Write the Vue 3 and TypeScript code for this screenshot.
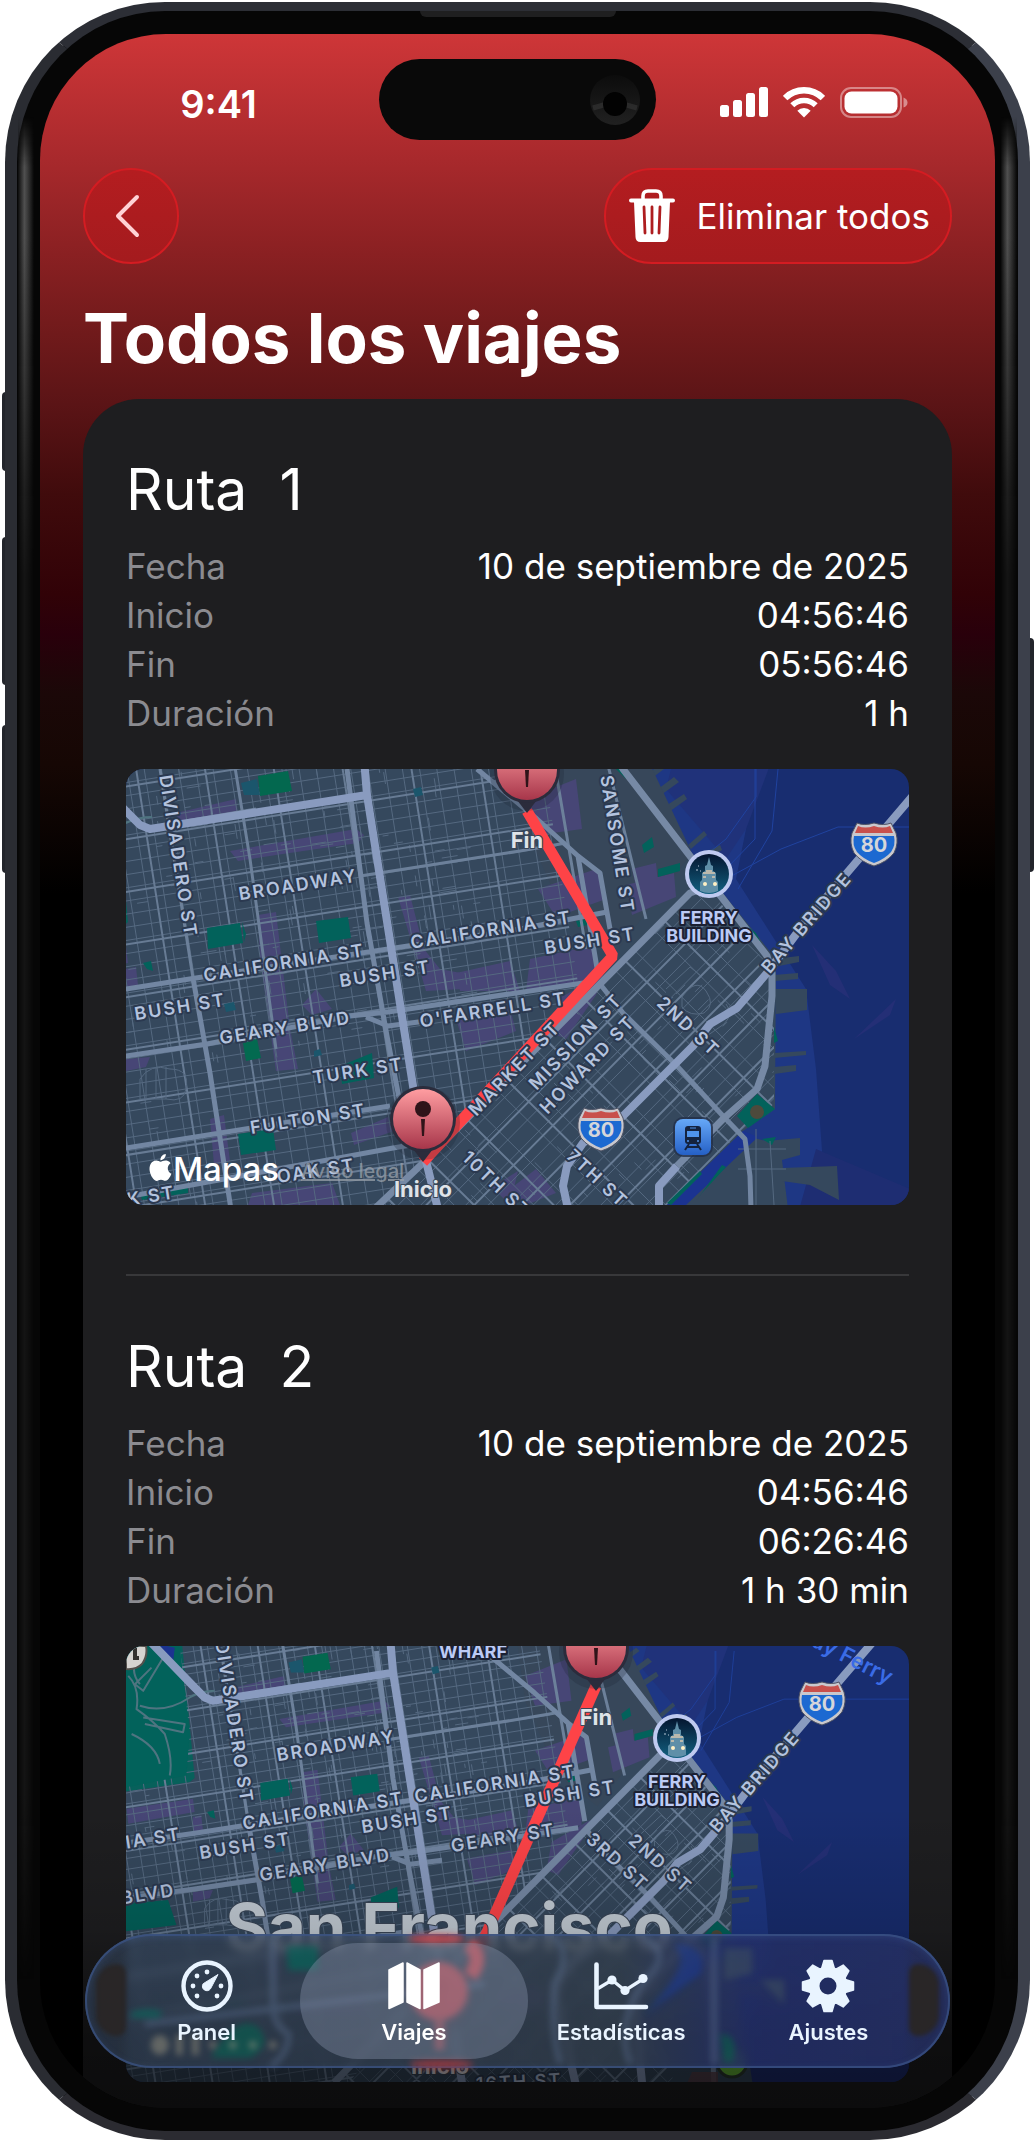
<script setup lang="ts">
interface Detail {
  term: string
  value: string
}

interface StreetLabel {
  text: string
  x: number
  y: number
  angle: number
  anchor?: 'start' | 'middle' | 'end'
}

interface Point {
  x: number
  y: number
}

interface Trip {
  id: number
  details: Detail[]
  cityTransform: string
  streets: StreetLabel[]
  shields: Point[]
  ferry: Point
  route: string
  start: Point
  end: Point
}

const trips: Trip[] = [
  {
    id: 1,
    details: [
      { term: 'Fecha', value: '10 de septiembre de 2025' },
      { term: 'Inicio', value: '04:56:46' },
      { term: 'Fin', value: '05:56:46' },
      { term: 'Duración', value: '1 h' },
    ],
    cityTransform: 'translate(0 0)',
    streets: [
      { text: 'DIVISADERO ST', x: 53, y: 87, angle: 81 },
      { text: 'BROADWAY', x: 172, y: 115, angle: -9 },
      { text: 'CALIFORNIA ST', x: 158, y: 193, angle: -9 },
      { text: 'CALIFORNIA ST', x: 365, y: 160, angle: -9 },
      { text: 'BUSH ST', x: 54, y: 237, angle: -9 },
      { text: 'BUSH ST', x: 259, y: 204, angle: -9 },
      { text: 'BUSH ST', x: 464, y: 171, angle: -9 },
      { text: 'GEARY BLVD', x: 159, y: 258, angle: -9 },
      { text: "O'FARRELL ST", x: 367, y: 240, angle: -9 },
      { text: 'TURK ST', x: 232, y: 301, angle: -9 },
      { text: 'FULTON ST', x: 182, y: 349, angle: -9 },
      { text: 'OAK ST', x: 190, y: 401, angle: -9 },
      { text: 'K ST', x: 25, y: 426, angle: -9 },
      { text: 'SANSOME ST', x: 492, y: 75, angle: 81 },
      { text: 'MARKET ST', x: 388, y: 299, angle: -46 },
      { text: 'MISSION ST', x: 449, y: 272, angle: -46 },
      { text: 'HOWARD ST', x: 461, y: 295, angle: -46 },
      { text: '2ND ST', x: 563, y: 257, angle: 43 },
      { text: '10TH ST', x: 371, y: 415, angle: 44 },
      { text: '7TH ST', x: 472, y: 409, angle: 43 },
      { text: 'BAY BRIDGE', x: 680, y: 153, angle: -49 },
    ],
    shields: [
      { x: 748, y: 74 },
      { x: 475, y: 359 },
    ],
    ferry: { x: 583, y: 105 },
    route: 'M297 393L487 187L401 42',
    start: { x: 297, y: 350 },
    end: { x: 401, y: 1 },
  },
  {
    id: 2,
    details: [
      { term: 'Fecha', value: '10 de septiembre de 2025' },
      { term: 'Inicio', value: '04:56:46' },
      { term: 'Fin', value: '06:26:46' },
      { term: 'Duración', value: '1 h 30 min' },
    ],
    cityTransform: 'translate(67 5) scale(.83)',
    streets: [
      { text: 'DIVISADERO ST', x: 109, y: 76, angle: 81 },
      { text: 'BROADWAY', x: 210, y: 99, angle: -9 },
      { text: 'CALIFORNIA ST', x: 197, y: 164, angle: -9 },
      { text: 'CALIFORNIA ST', x: 369, y: 137, angle: -9 },
      { text: 'IA ST', x: 55, y: 187, angle: -9, anchor: 'end' },
      { text: 'BUSH ST', x: 119, y: 199, angle: -9 },
      { text: 'BUSH ST', x: 281, y: 173, angle: -9 },
      { text: 'BUSH ST', x: 444, y: 147, angle: -9 },
      { text: 'GEARY BLVD', x: 199, y: 218, angle: -9 },
      { text: 'GEARY ST', x: 377, y: 191, angle: -9 },
      { text: 'BLVD', x: 49, y: 243, angle: -9, anchor: 'end' },
      { text: '3RD ST', x: 492, y: 215, angle: 42 },
      { text: '2ND ST', x: 535, y: 217, angle: 42 },
      { text: 'BAY BRIDGE', x: 628, y: 135, angle: -49 },
      { text: '16TH ST', x: 393, y: 435, angle: -3 },
    ],
    shields: [{ x: 696, y: 56 }],
    ferry: { x: 551, y: 92 },
    route: 'M314 392L470 40',
    start: { x: 314, y: 350 },
    end: { x: 470, y: 2 },
  },
]

/** Deterministic pseudo-random sequence, so that the alleys are stable. */
function sequence(seed: number): () => number {
  let state = seed
  return () => {
    state = (state * 1103515245 + 12345) % 2147483648
    return state / 2147483648
  }
}

/** Parallel lines between two bounds; `across` draws them horizontally. */
function parallels(from: number, to: number, step: number, lo: number, hi: number, across: boolean): string {
  const parts: string[] = []
  for (let v = from; v <= to; v += step) {
    parts.push(across ? `M${lo} ${v}H${hi}` : `M${v} ${lo}V${hi}`)
  }
  return parts.join('')
}

/** Short dead-end alleys hung on a grid. */
function alleys(seed: number, count: number, x0: number, x1: number, y0: number, y1: number): string {
  const next = sequence(seed)
  const parts: string[] = []
  for (let i = 0; i < count; i++) {
    const x = Math.round(x0 + next() * (x1 - x0))
    const y = Math.round(y0 + next() * (y1 - y0))
    const length = Math.round(5 + next() * 12)
    parts.push(next() > 0.5 ? `M${x} ${y}h${length}` : `M${x} ${y}v${length}`)
  }
  return parts.join('')
}

const northMinor =
  parallels(-400, 420, 17, -200, 620, false) + parallels(-180, 600, 13, -400, 420, true)
const northMedium =
  parallels(-391, 420, 68, -200, 620, false) + parallels(-176, 600, 52, -400, 420, true)
const northAlleys = alleys(7, 170, 30, 330, -60, 260) + alleys(21, 90, -320, 30, -60, 420)
const southMinor =
  parallels(-400, 500, 28, -10, 500, false) + parallels(12, 500, 16, -400, 500, true)
const southMedium =
  parallels(-386, 500, 56, -10, 500, false) + parallels(32, 500, 34, -400, 500, true)
const southAlleys = alleys(33, 120, -60, 380, 0, 240)
</script>

<template>
  <div class="device">
    <span class="key key-action"></span>
    <span class="key key-up"></span>
    <span class="key key-down"></span>
    <span class="key key-power"></span>

    <!-- Shared map drawing -->
    <svg class="library" width="0" height="0" aria-hidden="true">
      <defs>
        <linearGradient id="pin-fill" x1="0" y1="0" x2="0" y2="1">
          <stop offset="0" stop-color="#ff9da1" />
          <stop offset="1" stop-color="#a7364a" />
        </linearGradient>
        <linearGradient id="transit-fill" x1="0" y1="0" x2="0" y2="1">
          <stop offset="0" stop-color="#66a8f7" />
          <stop offset="1" stop-color="#2560c6" />
        </linearGradient>
        <linearGradient id="night" x1="0" y1="0" x2="0" y2="1">
          <stop offset="0" stop-color="#04152f" />
          <stop offset="1" stop-color="#126080" />
        </linearGradient>
        <clipPath id="north-area">
          <path d="M-100-60H460L491 0L556 87L564 124L297 394L170 540H-100Z" />
        </clipPath>
        <clipPath id="south-area">
          <path d="M564 124L590 128L641 195L648 230L648 335L617 360L541 436L590 540H150L297 394Z" />
        </clipPath>

        <g id="city">
          <rect x="-100" y="-60" width="1000" height="620" fill="#182d70" />
          <path d="M480-60H560L620 60L610 110L680 220L690 300L700 436L720 560H560L500 100Z" fill="#1e3784" />
          <path d="M560-60L650-20L620 60L600 90L540 20Z" fill="#20327a" />
          <path d="M640 560L690 380L784 420L870 400V560Z" fill="#1e2d72" />
          <path d="M686 176l18 40l20 14l-14-28zM728 270l42-40l-6 16z" fill="#242f76" />
          <g fill="#35485d">
            <path d="M-100-60H460L498 0L566 84L600 128L650 190L649 340L617 362L541 436L520 560H-100Z" />
            <path d="M560 432L624 368L640 372L674 369V386L656 391L662 440L680 560H500Z" />
            <path d="M656 399L711 397L713 431L684 416L656 412Z" />
            <path d="M648 220H681V241L650 245ZM648 190l25-3v6l-25 5zM648 206l24-2v6l-24 2zM648 284l32-2v4l-32 3zM648 298l22-2v6l-22 3z" />
            <path d="M514 10l20-14l4 4l-20 15zM524 26l24-18l5 5l-25 18zM532 42l26-17l3 5l-25 18zM562 76l16-14l3 4l-16 14zM574 86l20-10l2 5l-18 10z" />
          </g>
          <path d="M541 436L617 362L632 368L560 436Z" fill="#1b3390" />
          <path d="M384-60H498L566 84L487 187L440 150L400 60Z" fill="#37475a" />
          <g fill="#474676">
            <path d="M50 44L110 30L112 44L54 56ZM104 82L230 60L238 66L232 74L150 86L112 92ZM132 146L150 143L164 260L172 300L150 302L134 190ZM176 236L190 220L206 240L186 246ZM0 200L10 198L12 216L0 218ZM0 290L24 288L20 298L0 302ZM272 128L284 126L298 180L314 200L340 205L338 220L300 222ZM330 204L384 192L394 222L334 222ZM330 250L384 240L390 262L340 282ZM225 364L262 348L268 362L228 376ZM84 350L98 346L104 392L88 396ZM126 424L206 414L214 436H122Z" />
            <path d="M400 30L450 10L456 60L412 66ZM412 120L470 100L480 130L430 148ZM404 190L470 176L468 210L400 222ZM500 116L548 104L550 128L506 146ZM432 230L478 204L470 226L440 270L426 264ZM384 420L410 400L430 424L400 436ZM366 418L392 402L384 436ZM506 100L530 94L532 114L510 118Z" />
            <path d="M-80 190L0 178L2 194L-78 208Z" />
          </g>
          <path d="M-100-60H-18L2 153L-4 158L-100 172Z" fill="#07615b" />
          <path d="M-40-8L-22-4L-24 14L-36 6Z" fill="#1b3390" />

          <path class="ferry-line" d="M630 0V28L600 70L575 90M629 0V70L600 100M652 0L646 62L612 120M784 58H712L655 80L600 110M870 58H784" />

          <g clip-path="url(#north-area)">
            <g transform="rotate(-9 241 26)">
              <path class="road minor" :d="northMinor" />
              <path class="road minor" :d="northAlleys" />
              <path class="road medium" :d="northMedium" />
            </g>
          </g>
          <g clip-path="url(#south-area)">
            <g transform="translate(297 394) rotate(-45.3)">
              <path class="road minor" :d="southMinor" />
              <path class="road minor" :d="southAlleys" />
              <path class="road medium" :d="southMedium" />
            </g>
          </g>

          <g fill="#02625b">
            <path d="M-100-60H-22L-4 100L-8 150L-100 168Z" />
            <path d="M132 7L162 2L166 22L134 27Z" fill="#03684f" />
            <path d="M81 159L114 154L117 174L82 180ZM190 152L222 148L225 169L193 174ZM214 297L246 284L248 309L216 315ZM112 365L147 360L150 381L115 386ZM17 194l8-2l2 10l-6-2zM116 153l4 12l-2 8zM14 424l48-9v9l-46 7z" />
            <path d="M117 274L131 270L135 289L120 292Z" fill="#036a50" />
            <path d="M516 76l10-8l2 10l-10 6zM532 100l22-6v8l-22 6zM450 152l10-2l2 6l-10 2zM490 0l6 0l4 10zM618 154L630 164L641 186L630 178ZM648 258l4 14l-4 2z" />
            <path d="M611 347L631 325L649 340L622 359Z" />
            <path d="M541 434L574 402L576 405L545 436ZM570 432L596 396L600 398L576 424ZM636 370l14-2l-4 8z" />
            <path d="M-100 306L-30 300L-20 330L-100 340Z" />
          </g>
          <path d="M-40-8L-22-4L-24 14L-36 6Z" fill="#1b3390" />
          <path d="M115 14L131 10L134 26L118 26ZM287 20l8-2l2 8l-8 2zM98 235l10-2l2 8l-10 2zM188 282l6-2l2 6l-8 2z" fill="#1b566c" />
          <circle cx="631" cy="343" r="7" fill="#4d4a3c" />

          <path class="road park" d="M-78 30q14 14 10 40q20 14 34 30q10 30 6 50M-60 0q-20 20-4 40M-64 66q30 10 60-10q14-8 30-8M-60 80l50 8l-2 10l-46-10M-50 20l-20 20l10 8l24-40M-74 100q30 14 34 36" />
          <path class="road minor" d="M14 310q10-16 30-10q20 0 16 20q-2 14-20 10h-26zM20 300v30M30 298v32M40 298v32M540 220l24-22l10 8M556 228q14-20 24-6q10 14-2 22q-14 4-22-6zM600 235q8 10-2 20l-20 14M630 360V436M644 372l4 64M612 380h48M612 400h48" />

          <path class="road avenue" d="M34 0L67 209M234 107L394 82L440 74M106-20L124 90L150 280M60 52L130 40M426-20L460 180M478-20L520 150" />
          <path class="road major" d="M221 0L241 154L261 267L281 370M-100 234L0 220L70 209L394 160L481 143M-100 300L0 287L81 275L224 247L262 243L464 213M240 248L262 257L300 252M-100 394L0 379L264 337M-100 444L0 428L267 379L297 374M67 209L84 304L108 460M351 0L411 50L452 87L474 104L484 160M452 87L460 134L472 205M474 215L497 244L551 297L597 347L619 370L624 407L628 540" />
          <path class="road wide" d="M590 115L564 124L297 394L240 448L170 520M480-24L497 0L564 87L597 130L641 187L646 204V227L639 297L631 320L597 350L551 397" />
          <path class="road highway" d="M-60-20L0 42L14 56L24 60L241 26M238-10L241 26L297 380L312 440L330 560M870-70L784 30L680 152L641 204L611 239L584 255L567 277L497 347L457 374L441 397L437 417L442 440L470 560M551 397L533 417V440L545 560" />
        </g>

        <g id="pin">
          <circle cx="0" cy="4" r="37" fill="#1c2233" opacity=".25" />
          <path d="M-10 30L0 43L10 30Z" fill="#2b2c3c" />
          <circle r="33" fill="#2b2c3c" />
          <circle r="30" fill="url(#pin-fill)" />
          <circle cy="-10" r="8" fill="#2f1419" />
          <path d="M-2 0H2L1 17H-1Z" fill="#2f1419" />
        </g>

        <g id="shield">
          <path d="M-17-20Q-10-17 0-20Q10-17 17-20L22-10Q25 0 20 10Q13 19 0 23Q-13 19-20 10Q-25 0-22-10Z" fill="#c9c8cd" stroke="#4d5264" />
          <path d="M-16-17Q-9-14 0-17Q9-14 16-17L19-10H-19Z" fill="#c8504c" />
          <path d="M-20-7H20Q22 2 17 9Q11 16 0 20Q-11 16-17 9Q-22 2-20-7Z" fill="#1c69d1" />
        </g>

        <g id="ferry-badge">
          <circle r="24" fill="#bfcaf0" />
          <circle r="20" fill="url(#night)" />
          <path d="M0-17L2-9L4-8V-3L7-1V6L9 8V17Q0 21-9 17V8L-7 6V-1L-4-3V-8L-2-9Z" fill="#5f8fa8" />
          <path d="M-3-3H3M-6 3H-3M3 3H6M-6-1H6" stroke="#d9c8ae" stroke-width="1.5" />
          <circle cx="-4" cy="10" r="2" fill="#fff0c4" />
          <circle cx="6" cy="10" r="2" fill="#fff0c4" />
          <path d="M-13-4h2M-11-8h1M-9-3h1" stroke="#b8c8d8" />
        </g>
      </defs>
    </svg>

    <div class="phone">
      <span class="earpiece"></span>
      <main class="screen">
        <div class="status">
          <span class="time">9:41</span>
          <div class="island">
            <svg width="52" height="52" viewBox="0 0 52 52" aria-hidden="true">
              <defs>
                <linearGradient id="lens" x1="0" y1="0" x2="0" y2="1">
                  <stop offset="0" stop-color="#0c0c0c" />
                  <stop offset=".5" stop-color="#161616" />
                  <stop offset="1" stop-color="#212121" />
                </linearGradient>
              </defs>
              <circle cx="26" cy="26" r="25" fill="url(#lens)" />
              <path d="M4 34L18 30M48 34L34 30" stroke="#333" stroke-width="5" opacity=".7" />
              <circle cx="26" cy="30" r="12" fill="#020202" />
            </svg>
          </div>
          <div class="signals">
            <svg width="48" height="30" viewBox="0 0 48 30" aria-label="Cobertura">
              <g fill="#fff">
                <rect y="18" width="9" height="12" rx="2.5" />
                <rect x="13" y="13" width="9" height="17" rx="2.5" />
                <rect x="26" y="6" width="9" height="24" rx="2.5" />
                <rect x="39" width="9" height="30" rx="2.5" />
              </g>
            </svg>
            <svg width="42" height="31" viewBox="0 0 42 31" aria-label="Wi-Fi">
              <path d="M2.1 11.1A26.7 26.7 0 0 1 39.9 11.1" fill="none" stroke="#fff" stroke-width="6.4" />
              <path d="M9.3 18.3A16.5 16.5 0 0 1 32.7 18.3" fill="none" stroke="#fff" stroke-width="5.6" />
              <path d="M21 30.5L14.3 23.8A9.5 9.5 0 0 1 27.7 23.8Z" fill="#fff" />
            </svg>
            <svg width="68" height="31" viewBox="0 0 68 31" aria-label="Batería">
              <rect x="1" y="1" width="60" height="29" rx="10" fill="none" stroke="#fff" stroke-width="2" opacity=".42" />
              <rect x="4.5" y="4.5" width="53" height="22" rx="7" fill="#fff" />
              <path d="M63.5 10.5Q67.5 12 67.5 15.5T63.5 20.5Z" fill="#fff" opacity=".45" />
            </svg>
          </div>
        </div>

        <header class="toolbar">
          <button class="glass back" type="button" aria-label="Atrás">
            <svg width="28" height="46" viewBox="0 0 28 46" aria-hidden="true">
              <path d="M22 4L3 23L22 42" fill="none" stroke="#ffd2d5" stroke-width="4" stroke-linecap="round" stroke-linejoin="round" />
            </svg>
          </button>
          <button class="glass remove" type="button">
            <svg width="46" height="54" viewBox="0 0 46 54" aria-hidden="true">
              <path d="M14 11V7Q14 2 19 2H27Q32 2 32 7V11" fill="none" stroke="#fff" stroke-width="3.6" />
              <path d="M2 11.5H44" stroke="#fff" stroke-width="4" stroke-linecap="round" />
              <path d="M5 13H41L39.5 48Q39.3 53 34.5 53H11.5Q6.7 53 6.5 48Z" fill="#fff" />
              <path d="M15 18L16 44M23 18V44M31 18L30 44" stroke="#ae1d1f" stroke-width="2.8" stroke-linecap="round" />
            </svg>
            <span>Eliminar todos</span>
          </button>
        </header>

        <h1>Todos los viajes</h1>

        <section class="card">
          <article v-for="trip in trips" :key="trip.id" class="trip">
            <h2>Ruta&nbsp; {{ trip.id }}</h2>
            <dl>
              <div v-for="detail in trip.details" :key="detail.term" class="detail">
                <dt>{{ detail.term }}</dt>
                <dd>{{ detail.value }}</dd>
              </div>
            </dl>

            <svg class="map" viewBox="0 0 783 436" role="img" :aria-label="`Mapa de la ruta ${trip.id}`">
              <use href="#city" :transform="trip.cityTransform" />
              <path class="route" :d="trip.route" />
              <text
                v-for="(street, index) in trip.streets"
                :key="index"
                class="street"
                :text-anchor="street.anchor ?? 'middle'"
                dy="7"
                :transform="`translate(${street.x} ${street.y}) rotate(${street.angle})`"
              >{{ street.text }}</text>

              <g v-for="(shield, index) in trip.shields" :key="`s${index}`" :transform="`translate(${shield.x} ${shield.y})`">
                <use href="#shield" />
                <text class="shield-number" y="9">80</text>
              </g>

              <g :transform="`translate(${trip.ferry.x} ${trip.ferry.y})`">
                <use href="#ferry-badge" />
                <text class="place" y="50">FERRY</text>
                <text class="place" y="68">BUILDING</text>
              </g>

              <template v-if="trip.id === 1">
                <g transform="translate(567 368)">
                  <rect x="-20" y="-20" width="40" height="40" rx="10" fill="#23304a" opacity=".8" />
                  <rect x="-18" y="-18" width="36" height="36" rx="8" fill="url(#transit-fill)" />
                  <rect x="-8" y="-11" width="16" height="18" rx="3" fill="#14233f" />
                  <rect x="-6" y="-6" width="12" height="6" fill="#4f93ea" />
                  <path d="M-3-9H3" stroke="#4f93ea" />
                  <circle cx="-5" cy="4" r="1" fill="#4f93ea" />
                  <circle cx="5" cy="4" r="1" fill="#4f93ea" />
                  <path d="M-4 7L-8 13M4 7L8 13M-6 10H6" stroke="#14233f" stroke-width="2" />
                </g>
                <path
                  class="apple"
                  transform="translate(21 385) scale(1.12)"
                  d="M12.152 6.896c-.948 0-2.415-1.078-3.96-1.04-2.04.027-3.91 1.183-4.961 3.014-2.117 3.675-.546 9.103 1.519 12.09 1.013 1.454 2.208 3.09 3.792 3.039 1.52-.065 2.09-.987 3.935-.987 1.831 0 2.35.987 3.96.948 1.637-.026 2.676-1.48 3.676-2.948 1.156-1.688 1.636-3.325 1.662-3.415-.039-.013-3.182-1.221-3.22-4.857-.026-3.04 2.48-4.494 2.597-4.559-1.429-2.09-3.623-2.324-4.39-2.376-2-.156-3.675 1.09-4.61 1.09zM15.53 3.83c.843-1.012 1.4-2.427 1.245-3.83-1.207.052-2.662.805-3.532 1.818-.78.896-1.454 2.338-1.273 3.714 1.338.104 2.715-.688 3.559-1.701"
                />
                <text class="brand" x="47" y="412">Mapas</text>
                <a href="#aviso-legal"><text class="legal" x="175" y="409">Aviso legal</text></a>
              </template>

              <template v-else>
                <text class="city-name" x="323" y="304">San Francisco</text>
                <text class="place" x="347" y="12">WHARF</text>
                <text class="ferry-name" text-anchor="end" transform="translate(762 39) rotate(27)">Bay Ferry</text>
                <path d="M0 0H20Q22 10 16 18Q10 24 0 23Z" fill="#d6d3d0" stroke="#54504c" stroke-width="2" />
                <path d="M9 2V12H13" stroke="#33302e" stroke-width="4" fill="none" />
                <circle cx="606" cy="416" r="15" fill="#67b83a" stroke="#2b3a30" stroke-width="3" />
                <path d="M566 426H592V440H560Z" fill="#5a3f48" opacity=".8" />
              </template>

              <use href="#pin" :transform="`translate(${trip.start.x} ${trip.start.y})`" />
              <use href="#pin" :transform="`translate(${trip.end.x} ${trip.end.y})`" />
              <text class="stop" :x="trip.end.x" y="79">Fin</text>
              <text class="stop" :x="trip.start.x" y="428">Inicio</text>
            </svg>
          </article>
        </section>

        <nav class="tabs" aria-label="Secciones">
          <svg class="refraction" viewBox="0 0 866 134" preserveAspectRatio="none" aria-hidden="true">
            <g fill="none" stroke="#5b7090" stroke-width="6" opacity=".55">
              <path d="M188 6V70Q188 92 204 100Q204 120 186 132M60 90Q200 74 400 50" />
              <path d="M470 4Q488 20 470 50Q466 100 476 130M560 4Q590 20 560 46Q530 90 546 130M630 4V130" />
            </g>
            <path d="M202 12H233V36H204Z" fill="#07645a" opacity=".8" />
            <path d="M126 124Q150 80 172 92Q190 110 166 124Z" fill="#075f50" opacity=".8" />
            <path d="M46 78Q64 72 78 78L74 84H46Z" fill="#07645a" opacity=".8" />
            <g fill="#b8ad90" opacity=".5">
              <ellipse cx="75" cy="111" rx="9" ry="10" />
              <rect x="91" y="101" width="7" height="20" />
              <rect x="107" y="101" width="7" height="20" />
              <circle cx="128" cy="111" r="4" />
              <circle cx="148" cy="111" r="4" />
              <circle cx="168" cy="111" r="4" />
              <circle cx="188" cy="111" r="4" />
            </g>
            <path d="M590 10Q624 10 616 40L560 80Q600 40 596 20Z" fill="#1d3b90" opacity=".7" />
            <path d="M640 14H668V40L640 46ZM676 46H700V70Z" fill="#3d4e60" opacity=".7" />
            <path d="M636 100Q656 100 648 128H640Z" fill="#0a5c48" opacity=".8" />
            <ellipse cx="352" cy="5" rx="28" ry="5" fill="#d4474c" />
            <path d="M384 10Q400 24 386 42" fill="none" stroke="#dc4a4f" stroke-width="14" />
            <circle cx="354" cy="57" r="29" fill="#c8484f" />
            <path d="M350 84H360V116H350Z" fill="#a04850" />
            <ellipse cx="357" cy="130" rx="32" ry="4" fill="#a8363c" />
          </svg>
          <a class="tab" href="#panel">
            <svg width="56" height="56" viewBox="-28 -28 56 56" aria-hidden="true">
              <circle r="23.5" fill="none" stroke="currentColor" stroke-width="4.4" />
              <g fill="currentColor">
                <circle cy="-14" r="2.4" />
                <circle cx="-10" cy="-10" r="2.4" />
                <circle cx="-14" r="2.4" />
                <circle cx="-10" cy="10" r="2.4" />
                <circle cx="10" cy="10" r="2.4" />
                <circle cx="14" r="2.4" />
                <path d="M11-11.500L3.500 2.800A4.300 4.300 0 1 1-3.800-2.300Z" stroke="currentColor" stroke-linejoin="round" />
              </g>
            </svg>
            <span>Panel</span>
          </a>
          <a class="tab active" href="#viajes" aria-current="page">
            <svg width="56" height="56" viewBox="-28 -28 56 56" aria-hidden="true">
              <path d="M-25-16L-11-23V16L-25 22.5ZM-7-23L6-16V22.5L-7 16ZM10-16L25-23V16L10 22.5Z" fill="currentColor" stroke="currentColor" stroke-width="1.5" stroke-linejoin="round" />
            </svg>
            <span>Viajes</span>
          </a>
          <a class="tab" href="#estadisticas">
            <svg width="56" height="56" viewBox="-28 -28 56 56" aria-hidden="true">
              <path d="M-24.5-21.5V21H25" fill="none" stroke="currentColor" stroke-width="4.6" stroke-linecap="round" stroke-linejoin="round" />
              <path d="M-23 2.5L-9-6L4 4.5L22-7" fill="none" stroke="currentColor" stroke-width="3.4" />
              <g fill="currentColor">
                <circle cx="-9" cy="-6" r="4.6" />
                <circle cx="4" cy="4.5" r="4.6" />
                <circle cx="22" cy="-7.5" r="4.6" />
              </g>
            </svg>
            <span>Estadísticas</span>
          </a>
          <a class="tab" href="#ajustes">
            <svg width="56" height="56" viewBox="-28 -28 56 56" aria-hidden="true">
              <circle r="14" fill="none" stroke="currentColor" stroke-width="11" />
              <path
                v-for="tooth in 8"
                :key="tooth"
                d="M-4-25.5H4L6.5-17H-6.5Z"
                fill="currentColor"
                stroke="currentColor"
                stroke-width="1.5"
                stroke-linejoin="round"
                :transform="`rotate(${tooth * 45})`"
              />
            </svg>
            <span>Ajustes</span>
          </a>
        </nav>
      </main>
    </div>
  </div>
</template>

<style>
body {
  margin: 0;
  background: #fff;
}
</style>

<style scoped>
.device {
  position: relative;
  padding: 2px 5px;
  font-family: Inter, 'Liberation Sans', sans-serif;
  color: #fff;
}

.library {
  position: absolute;
}

.key {
  position: absolute;
  left: 2px;
  width: 8px;
  border-radius: 4px;
  background: #23252b;
}

.key-action {
  top: 392px;
  height: 79px;
}

.key-up {
  top: 537px;
  height: 148px;
}

.key-down {
  top: 725px;
  height: 148px;
}

.key-power {
  top: 638px;
  right: 1px;
  left: auto;
  height: 234px;
}

.phone {
  position: relative;
  padding: 23px;
  border: solid;
  border-width: 9px 12px;
  border-color: #2c2e35 #3c404b #2b2b31 #2a2c32;
  border-radius: 160px;
  background: #060606;
}

/* Light running down the polished sides of the bezel */
.phone::before,
.phone::after {
  content: '';
  position: absolute;
  top: 106px;
  bottom: 150px;
  left: 1px;
  width: 16px;
  background: linear-gradient(90deg, #0c0c0c, #505050 40%, #3a3a3a 60%, #060606);
  mask-image: linear-gradient(#0000, #000 50px, #000 120px, #0005 380px, #0003 460px, #0003 90%, #0000);
}

.phone::after {
  right: 1px;
  left: auto;
}

.earpiece {
  position: absolute;
  top: 0;
  left: calc(50% - 98px);
  width: 196px;
  height: 6px;
  border-radius: 0 0 6px 6px;
  background: #1f1f20;
}

.screen {
  position: relative;
  z-index: 1;
  display: flex;
  flex-direction: column;
  padding: 25px 43px 0;
  overflow: hidden;
  border-radius: 126px;
  background: #000 linear-gradient(#ce3638, #a8292c 125px, #8a2022 220px, #701a1b 300px, #5b1416 370px, #400b0c 460px, #310207 560px, #29000b 600px, #1b0808 660px, #160704 730px, #000 860px) no-repeat;
}

.screen::after {
  content: '';
  position: absolute;
  right: 0;
  bottom: 0;
  left: 0;
  height: 300px;
  background: linear-gradient(#0000, #0002 120px, #0008 230px, #0009);
  pointer-events: none;
}

.status {
  display: grid;
  grid-template-columns: 1fr 277px 1fr;
  align-items: center;
  margin: 0 -43px;
}

.time {
  padding: 8px 0 0 18px;
  font-size: 38px;
  font-weight: 600;
  line-height: 46px;
  text-align: center;
}

.island {
  display: flex;
  align-items: center;
  justify-content: flex-end;
  box-sizing: border-box;
  height: 81px;
  padding-right: 15px;
  border-radius: 41px;
  background: #090909;
}

.signals {
  display: flex;
  justify-content: center;
  gap: 15px;
  padding: 6px 24px 0 0;
}

.toolbar {
  display: flex;
  justify-content: space-between;
  margin-top: 28px;
}

.glass {
  display: flex;
  align-items: center;
  justify-content: center;
  height: 96px;
  padding: 0;
  border: 2px solid #d41c22;
  border-radius: 48px;
  background: linear-gradient(#b41d20, #a41b1e);
  color: #fff;
  font-family: inherit;
  font-size: 35px;
  line-height: 44px;
}

.back {
  width: 96px;
}

.back svg {
  margin-right: 4px;
}

.remove {
  gap: 22px;
  padding: 0 20px 0 23px;
}

h1 {
  margin: 30px 0 17px;
  font-size: 69px;
  font-weight: 700;
  line-height: 88px;
}

.card {
  padding: 0 43px;
  border-radius: 56px 56px 0 0;
  background: #1e1e20;
}

.trip {
  padding: 55px 0 69px;
  border-bottom: 2px solid #38383a;
}

.trip:last-child {
  padding-bottom: 26px;
  border-bottom: 0;
}

h2 {
  margin: 0 0 16px;
  font-size: 57px;
  font-weight: 400;
  line-height: 72px;
}

dl {
  margin: 0 0 31px;
  font-size: 35px;
  line-height: 49px;
}

.detail {
  display: flex;
  justify-content: space-between;
}

dt {
  color: #8b8b90;
}

dd {
  margin: 0;
}

.map {
  display: block;
  width: 100%;
  border-radius: 18px;
  overflow: hidden;
}

.road {
  fill: none;
  stroke-linejoin: round;
  vector-effect: non-scaling-stroke;
}

.minor {
  stroke: #556980;
  stroke-width: 1px;
}

.medium {
  stroke: #677b94;
  stroke-width: 2px;
}

.park {
  stroke: #4f7480;
  stroke-width: 2px;
}

.avenue {
  stroke: #6c809a;
  stroke-width: 3px;
}

.major {
  stroke: #7286a2;
  stroke-width: 5px;
}

.wide {
  stroke: #7689a5;
  stroke-width: 7px;
}

.highway {
  stroke: #899bbf;
  stroke-width: 8px;
}

.ferry-line {
  fill: none;
  stroke: #20439f;
  stroke-width: 1px;
}

.route {
  fill: none;
  stroke: #fe4347;
  stroke-width: 11px;
  stroke-linejoin: bevel;
}

.map text {
  paint-order: stroke;
  stroke-linejoin: round;
}

.street {
  fill: #b4c3de;
  stroke: #2b3950;
  stroke-width: 4px;
  font-size: 18px;
  font-weight: 600;
  letter-spacing: 2px;
}

.place {
  fill: #bccbf5;
  stroke: #1b2033;
  stroke-width: 4px;
  font-size: 18px;
  font-weight: 700;
  text-anchor: middle;
}

.shield-number {
  fill: #d5d6da;
  font-size: 20px;
  font-weight: 700;
  text-anchor: middle;
}

.stop {
  fill: #dfe3e8;
  stroke: #3a4658;
  stroke-width: 2px;
  font-size: 22px;
  font-weight: 700;
  text-anchor: middle;
}

.apple {
  fill: #fff;
}

.brand {
  fill: #fff;
  font-size: 33px;
  font-weight: 500;
}

.legal {
  fill: #98a0aa;
  fill-opacity: 0.75;
  font-size: 20px;
  font-weight: 500;
  text-decoration: underline;
}

.city-name {
  fill: #c5ced7;
  stroke: #3a4658;
  stroke-width: 2px;
  font-size: 65px;
  font-weight: 700;
  text-anchor: middle;
}

.ferry-name {
  fill: #3a6be6;
  font-size: 22px;
  font-weight: 600;
}

.tabs {
  position: absolute;
  right: 45px;
  bottom: 40px;
  left: 45px;
  z-index: 2;
  display: grid;
  grid-template-columns: repeat(4, 1fr);
  padding: 9px 18px;
  border-radius: 67px;
  background: linear-gradient(90deg, #2f3d51b8, #333f50c0 45%, #323e4dc8 62%, #242f66d0 76%, #263062e0);
  box-shadow: inset 0 0 0 2px #3c5688aa, inset 0 2px 8px #4b6cae55;
  backdrop-filter: blur(4px);
}

.refraction {
  position: absolute;
  top: 0;
  left: 0;
  width: 100%;
  height: 100%;
  border-radius: 67px;
  opacity: 0.8;
  filter: blur(3px);
}

/* Card edges seen through both ends of the bar */
.tabs::before,
.tabs::after {
  content: '';
  position: absolute;
  top: 30px;
  left: 11px;
  width: 30px;
  height: 72px;
  border-radius: 24px 10px 10px 24px;
  background: #292627;
  filter: blur(2px);
}

.tabs::after {
  right: 11px;
  left: auto;
  border-radius: 10px 24px 24px 10px;
}

.tab {
  position: relative;
  display: flex;
  flex-direction: column;
  align-items: center;
  gap: 5px;
  box-sizing: border-box;
  height: 116px;
  padding-top: 15px;
  color: #e9f4ff;
  font-size: 22px;
  font-weight: 600;
  line-height: 26px;
  text-decoration: none;
}

.active {
  margin: 0 -10px;
  border-radius: 58px;
  background: #8794a966;
  color: #fff;
}
</style>
